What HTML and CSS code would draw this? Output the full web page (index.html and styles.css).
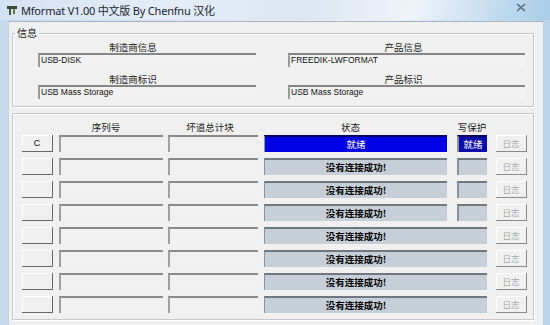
FILE: index.html
```html
<!DOCTYPE html>
<html lang="zh-CN">
<head>
    <meta charset="UTF-8">
    <title>Mformat V1.00 中文版 By Chenfnu 汉化</title>
    <link rel="stylesheet" href="styles.css">
</head>
<body>
    <div class="window">
        <div class="titlebar">
            <svg class="app-icon" width="12" height="12" viewBox="0 0 12 12">
                <rect x="1" y="2" width="10" height="3" fill="#3a4a3a"/>
                <rect x="3" y="5" width="2" height="6" fill="#4a5a3a"/>
                <rect x="7" y="5" width="2" height="5" fill="#6a7a4a"/>
            </svg>
            <span class="title">Mformat V1.00 中文版 By Chenfnu 汉化</span>
            <span class="close">
                <svg width="10" height="9" viewBox="0 0 10 9">
                    <path d="M1 1 L9 8 M9 1 L1 8" stroke="#5a6d80" stroke-width="1.6"/>
                </svg>
            </span>
        </div>

        <div class="client">
            <fieldset class="info">
                <legend>信息</legend>
                <div class="info-grid">
                    <div class="info-col">
                        <div class="info-label">制造商信息</div>
                        <div class="info-field">USB-DISK</div>
                        <div class="info-label">制造商标识</div>
                        <div class="info-field">USB Mass Storage</div>
                    </div>
                    <div class="info-col right">
                        <div class="info-label">产品信息</div>
                        <div class="info-field">FREEDIK-LWFORMAT</div>
                        <div class="info-label">产品标识</div>
                        <div class="info-field">USB Mass Storage</div>
                    </div>
                </div>
            </fieldset>

            <div class="devices">
                <div class="row head">
                    <span class="c-btn blank"></span>
                    <span class="c-serial">序列号</span>
                    <span class="c-bad">坏道总计块</span>
                    <span class="c-status">状态</span>
                    <span class="c-wp">写保护</span>
                    <span class="c-log blank"></span>
                </div>
                <div class="row">
                    <button class="c-btn">C</button>
                    <span class="c-serial field"></span>
                    <span class="c-bad field"></span>
                    <span class="c-status status ready">就绪</span>
                    <span class="c-wp wp ready">就绪</span>
                    <button class="c-log log" disabled>日志</button>
                </div>
                <div class="row">
                    <button class="c-btn"></button>
                    <span class="c-serial field"></span>
                    <span class="c-bad field"></span>
                    <span class="c-status status">没有连接成功!</span>
                    <span class="c-wp wp"></span>
                    <button class="c-log log" disabled>日志</button>
                </div>
                <div class="row">
                    <button class="c-btn"></button>
                    <span class="c-serial field"></span>
                    <span class="c-bad field"></span>
                    <span class="c-status status">没有连接成功!</span>
                    <span class="c-wp wp"></span>
                    <button class="c-log log" disabled>日志</button>
                </div>
                <div class="row">
                    <button class="c-btn"></button>
                    <span class="c-serial field"></span>
                    <span class="c-bad field"></span>
                    <span class="c-status status">没有连接成功!</span>
                    <span class="c-wp wp"></span>
                    <button class="c-log log" disabled>日志</button>
                </div>
                <div class="row">
                    <button class="c-btn"></button>
                    <span class="c-serial field"></span>
                    <span class="c-bad field"></span>
                    <span class="c-status status wide">没有连接成功!</span>
                    <button class="c-log log" disabled>日志</button>
                </div>
                <div class="row">
                    <button class="c-btn"></button>
                    <span class="c-serial field"></span>
                    <span class="c-bad field"></span>
                    <span class="c-status status wide">没有连接成功!</span>
                    <button class="c-log log" disabled>日志</button>
                </div>
                <div class="row">
                    <button class="c-btn"></button>
                    <span class="c-serial field"></span>
                    <span class="c-bad field"></span>
                    <span class="c-status status wide">没有连接成功!</span>
                    <button class="c-log log" disabled>日志</button>
                </div>
                <div class="row">
                    <button class="c-btn"></button>
                    <span class="c-serial field"></span>
                    <span class="c-bad field"></span>
                    <span class="c-status status wide">没有连接成功!</span>
                    <button class="c-log log" disabled>日志</button>
                </div>
            </div>
        </div>
    </div>
</body>
</html>
```

FILE: styles.css
```css
body {
    margin: 0;
    width: 550px;
    height: 325px;
    overflow: hidden;
    font-family: "Noto Sans", "Noto Sans CJK SC", sans-serif;
    background: linear-gradient(90deg, #c5d8ec 0%, #dbe7f4 40%, #e9f0f8 70%, #b9d3ea 100%);
}

.window {
    display: flex;
    flex-direction: column;
    height: 325px;
}

.titlebar {
    height: 20px;
    display: flex;
    align-items: center;
    padding: 0 6px 0 6px;
    background: linear-gradient(100deg, #d3e2f2 0%, #e4edf7 30%, #dce6f1 55%, #eef3f9 75%, #c2dbef 90%, #a9cde6 100%);
}

.app-icon {
    margin-right: 3px;
}

.title {
    font-size: 11px;
    color: #1b2533;
    letter-spacing: -0.2px;
}

.close {
    margin-left: auto;
    margin-right: 18px;
    margin-top: -6px;
    display: flex;
}

.client {
    flex: 1;
    margin: 1px 7px 0 8px;
    background: #f0f0f0;
    border-top: 1px solid #a8b4c0;
    border-left: 1px solid #c8d2dc;
    padding: 5px 9px 0 3px;
}

.info {
    margin: 0;
    padding: 0 7px 0 25px;
    border: 1px solid #c9c9c9;
    box-shadow: inset 1px 1px 0 #fff, 1px 1px 0 #fff;
    height: 80px;
    box-sizing: border-box;
}

.info legend {
    font-family: "Noto Sans CJK SC", sans-serif;
    font-size: 10px;
    color: #222;
    padding: 0 2px;
    margin-left: -23px;
    line-height: 12px;
}

.info-grid {
    display: grid;
    grid-template-columns: 218px 237px;
    column-gap: 32px;
    margin-top: 3px;
}

.info-label {
    font-family: "Noto Sans CJK SC", sans-serif;
    font-size: 9.5px;
    line-height: 11px;
    height: 11px;
    text-align: center;
    padding-right: 28px;
    color: #222;
}

.info-col.right .info-label {
    padding-right: 0;
    margin-left: -6px;
}

.info-field {
    height: 14px;
    box-sizing: border-box;
    border-top: 2px solid #868686;
    border-left: 2px solid #9a9a9a;
    background: #f2f2f2;
    font-family: "Liberation Sans", Arial, sans-serif;
    font-size: 8.5px;
    line-height: 11px;
    padding-left: 1px;
    color: #111;
    margin-bottom: 7px;
}

.devices {
    margin-top: 6px;
    height: 207px;
    box-sizing: border-box;
    border: 1px solid #c9c9c9;
    box-shadow: inset 1px 1px 0 #fff, 1px 1px 0 #fff;
    padding: 8px 0 0 9px;
    display: flex;
    flex-direction: column;
    gap: 6px;
}

.row {
    display: flex;
    height: 17px;
}

.row.head {
    height: 11px;
    margin-bottom: -4px;
    font-family: "Noto Sans CJK SC", sans-serif;
    font-size: 9.5px;
    line-height: 11px;
    color: #222;
    text-align: center;
}

.c-btn {
    width: 31px;
}

.c-serial {
    width: 104px;
    margin-left: 6px;
}

.c-bad {
    width: 90px;
    margin-left: 5px;
}

.c-status {
    width: 183px;
    margin-left: 6px;
}

.c-wp {
    width: 30px;
    margin-left: 10px;
}

.c-log {
    width: 31px;
    margin-left: 9px;
}

.head .c-serial {
    padding-right: 10px;
    box-sizing: border-box;
}

.head .c-bad {
    padding-right: 6px;
    box-sizing: border-box;
}

.head .c-status {
    padding-right: 10px;
    box-sizing: border-box;
}

.head .c-wp {
    width: 34px;
    margin-left: 8px;
}

button {
    margin: 0;
    padding: 0;
    height: 17px;
    background: #f0f0f0;
    border: none;
    border-right: 1px solid #6a6a6a;
    border-bottom: 1px solid #6a6a6a;
    box-shadow: inset 1px 1px 0 #fff;
    font-family: "Liberation Sans", Arial, sans-serif;
    font-size: 9px;
    color: #111;
}

.row .c-log {
    margin-left: 9px;
}

.log {
    font-family: "Noto Sans CJK SC", sans-serif;
    font-size: 8.5px;
    color: #a9a9a9;
    border-right: 1px solid #8a8a8a;
    border-bottom: 1px solid #8a8a8a;
}

.field {
    box-sizing: border-box;
    height: 17px;
    border-top: 2px solid #8a8a8a;
    border-left: 2px solid #a0a0a0;
    background: #f1f1f1;
}

.status {
    box-sizing: border-box;
    height: 17px;
    border-top: 2px solid #6f7780;
    border-left: 1px solid #8a939c;
    background: #c6cfd8;
    font-family: "Noto Sans CJK SC", sans-serif;
    font-weight: bold;
    font-size: 9.5px;
    line-height: 14px;
    text-align: center;
    color: #000;
}

.status.wide {
    width: 223px;
    padding-right: 40px;
}

.status.ready {
    background: #0000e4;
    border-top: 2px solid #00006e;
    color: #fff;
    font-weight: normal;
}

.wp {
    box-sizing: border-box;
    height: 17px;
    border-top: 2px solid #6f7780;
    border-left: 2px solid #8a939c;
    background: #c6cfd8;
    font-family: "Noto Sans CJK SC", sans-serif;
    font-size: 9.5px;
    line-height: 14px;
    text-align: center;
}

.wp.ready {
    background: #0c0ca8;
    border-top: 2px solid #000060;
    color: #fff;
}
```
